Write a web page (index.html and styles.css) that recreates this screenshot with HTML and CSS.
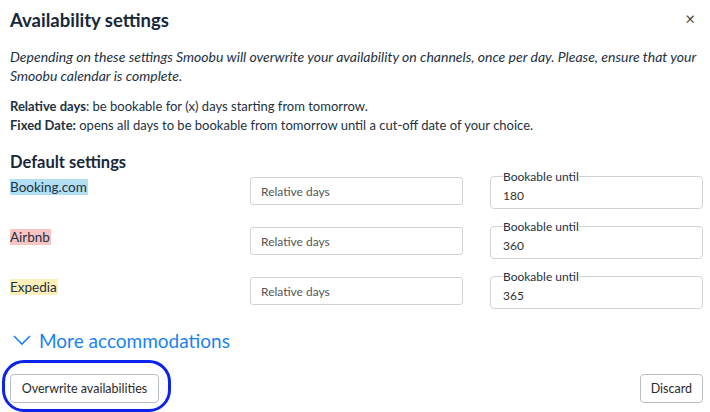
FILE: index.html
```html
<!DOCTYPE html>
<html lang="en">
<head>
    <meta charset="UTF-8">
    <meta name="viewport" content="width=device-width, initial-scale=1.0">
    <title>Availability settings</title>
    <link rel="stylesheet" href="styles.css">
</head>
<body>
    <div class="modal">
        <div class="modal-header">
            <h1>Availability settings</h1>
            <button class="close-btn" aria-label="Close">&times;</button>
        </div>

        <p class="intro">Depending on these settings Smoobu will overwrite your availability on channels, once per day. Please, ensure that your Smoobu calendar is complete.</p>

        <p class="legend">
            <b>Relative days</b>: be bookable for (x) days starting from tomorrow.<br>
            <b>Fixed Date:</b> opens all days to be bookable from tomorrow until a cut-off date of your choice.
        </p>

        <h2>Default settings</h2>

        <div class="channel-row">
            <div class="channel"><span class="tag booking">Booking.com</span></div>
            <input type="text" class="mode" placeholder="Relative days">
            <fieldset class="until">
                <legend>Bookable until</legend>
                <input type="text" value="180">
            </fieldset>
        </div>

        <div class="channel-row">
            <div class="channel"><span class="tag airbnb">Airbnb</span></div>
            <input type="text" class="mode" placeholder="Relative days">
            <fieldset class="until">
                <legend>Bookable until</legend>
                <input type="text" value="360">
            </fieldset>
        </div>

        <div class="channel-row">
            <div class="channel"><span class="tag expedia">Expedia</span></div>
            <input type="text" class="mode" placeholder="Relative days">
            <fieldset class="until">
                <legend>Bookable until</legend>
                <input type="text" value="365">
            </fieldset>
        </div>

        <a class="more" href="#">
            <svg width="18" height="12" viewBox="0 0 18 12"><path d="M1 2l8 8 8-8" fill="none" stroke="#1a82f0" stroke-width="1.6"/></svg>
            More accommodations
        </a>

        <div class="modal-footer">
            <button class="btn btn-overwrite">Overwrite availabilities</button>
            <button class="btn">Discard</button>
        </div>
    </div>
</body>
</html>
```

FILE: styles.css
```css
body {
    margin: 0;
    background-color: #ffffff;
    font-family: Lato, "Liberation Sans", sans-serif;
    color: #22313f;
}
.modal {
    width: 710px;
    height: 412px;
    padding: 0 7px 0 10px;
    box-sizing: border-box;
    overflow: hidden;
}
.modal-header {
    display: flex;
    justify-content: space-between;
    align-items: flex-start;
    height: 44px;
}
h1 {
    margin: 9px 0 0;
    font-size: 18.5px;
    font-weight: 700;
    color: #17283a;
}
.close-btn {
    margin: 8px 8px 0 0;
    padding: 0;
    border: none;
    background: none;
    font-size: 17px;
    color: #444;
    cursor: pointer;
    font-family: inherit;
}
.intro {
    margin: 3px 0 0;
    font-size: 14px;
    font-style: italic;
    line-height: 19px;
    color: #22313f;
}
.legend {
    margin: 12px 0 0;
    font-size: 13px;
    line-height: 19px;
}
h2 {
    margin: 17px 0 6px;
    font-size: 16.5px;
    font-weight: 700;
    color: #17283a;
    line-height: 20px;
}
.channel-row {
    display: flex;
    align-items: flex-start;
    height: 50px;
}
.channel {
    width: 240px;
    font-size: 13.5px;
    line-height: 15px;
    padding-top: 2px;
}
.tag {
    padding: 0 1px 0 0;
}
.tag.booking { background-color: #b2def2; }
.tag.airbnb { background-color: #f8c4c4; }
.tag.expedia { background-color: #fcefba; }
.mode {
    width: 213px;
    height: 28px;
    box-sizing: border-box;
    margin: -1px 0 0 0;
    border: 1px solid #cfd3d8;
    border-radius: 3px;
    padding: 0 10px;
    font-family: inherit;
    font-size: 12px;
    color: #333;
}
.mode::placeholder {
    color: #555;
}
.until {
    margin: -9px 0 0 27px;
    width: 213px;
    height: 40px;
    box-sizing: border-box;
    border: 1px solid #cfd3d8;
    border-radius: 4px;
    padding: 0 12px;
}
.until legend {
    padding: 0;
    font-size: 12px;
    color: #22313f;
}
.until input {
    border: none;
    padding: 0;
    margin: 0;
    width: 100%;
    font-family: inherit;
    font-size: 12px;
    color: #333;
    outline: none;
}
.more {
    display: flex;
    align-items: center;
    gap: 8px;
    margin: 0 0 0 3px;
    font-size: 19px;
    color: #1a82f0;
    text-decoration: none;
    height: 24px;
}
.modal-footer {
    display: flex;
    justify-content: space-between;
    margin-top: 22px;
}
.btn {
    height: 29px;
    padding: 0 10px;
    border: 1px solid #b9bdc2;
    border-radius: 4px;
    background-color: #ffffff;
    font-family: inherit;
    font-size: 12.5px;
    color: #2a2a2a;
    cursor: pointer;
}
.btn-overwrite {
    position: relative;
    width: 149px;
}
/* annotation ring around the main action */
.btn-overwrite::after {
    content: "";
    position: absolute;
    left: -9px;
    right: -13px;
    top: -15px;
    bottom: -10px;
    border: 3px solid #0c24ea;
    border-radius: 22px;
}
```
